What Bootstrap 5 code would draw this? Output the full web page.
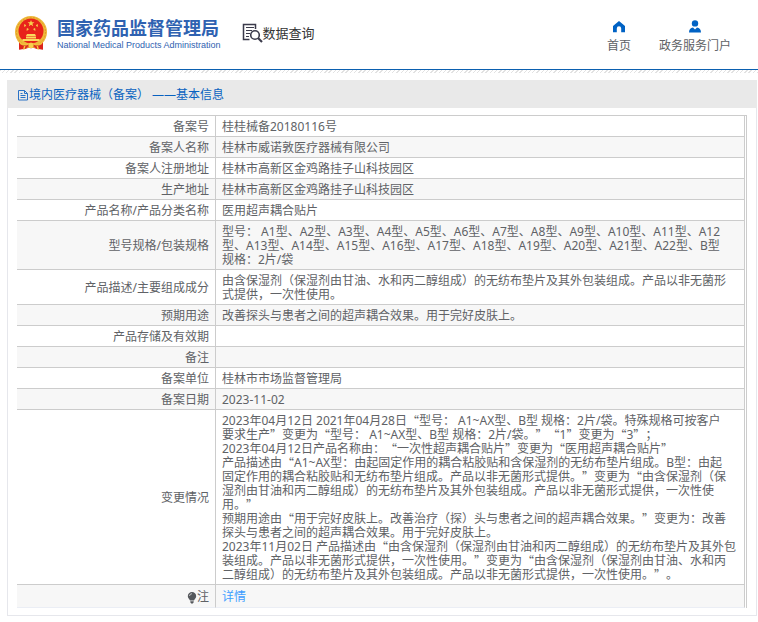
<!DOCTYPE html>
<html lang="zh-CN">
<head>
<meta charset="utf-8">
<meta name="viewport" content="width=device-width, initial-scale=1">
<title>国家药品监督管理局 数据查询</title>
<link href="https://cdn.jsdelivr.net/npm/bootstrap@5.3.0/dist/css/bootstrap.min.css" rel="stylesheet">
<style>
body{font:12px/14px "Noto Sans","Noto Sans CJK SC",sans-serif;color:#606266;background:#fff;text-spacing-trim:space-all}
a{text-decoration:none}
.site-head{height:69px;padding:0 27px 4px 14px}
.rule-line{height:4px;border-top:1px solid #0b60b0;background:repeating-linear-gradient(135deg,#e2e2e2 0 1px,#fff 1px 3px)}
.brand-link{color:#2f62b1;gap:9px}
.brand-text{padding-top:2px}
.brand-cn{font-size:18px;line-height:22px;font-weight:700;white-space:nowrap}
.brand-en{font:500 9px/12px "Liberation Sans",sans-serif;white-space:nowrap}
.query-block{margin-left:21px}
.query-title{font-size:13px;line-height:18px;font-weight:400;color:#333;font-family:"Noto Sans CJK SC",sans-serif;margin:0}
.top-links{gap:28px;padding-top:20px}
.top-links a{color:#606266;gap:6px}
.top-links svg{fill:#0062c4}
.panel-box{margin:7px 1px 0 7px;border:1px solid #e6e7ec}
.panel-title{background:#e9e9e9;color:#0862c0;font-size:12px;line-height:14px;font-weight:400;margin:-1px -1px 0;padding:8px 10px 6px}
.table-frame{margin:7px 9px;border-top:1px solid #ccc;border-right:1px solid #ccc;padding-right:1px}
.info-table{width:100%;border-collapse:separate;border-spacing:0}
.info-table th,.info-table td{padding:4px 6px 2px;border-right:1px solid #ccc;border-bottom:1px solid #ccc;height:21px;vertical-align:middle;font-weight:400}
.info-table td{padding-right:7px}
.info-table th{width:199px;text-align:right}
.info-table tr:nth-child(even){background:#f7f7f7}
.info-table tr:last-child>*{height:23px;border-bottom-color:#ebeef5}
.info-table a{color:#409eff}
.qt{font-family:"Noto Sans CJK SC",sans-serif;vertical-align:top}
</style>
<script src="https://cdn.jsdelivr.net/npm/bootstrap@5.3.0/dist/js/bootstrap.bundle.min.js"></script>
</head>
<body>
<header>
<div class="site-head d-flex justify-content-between">
  <div class="d-flex align-items-center">
    <a href="#" class="brand-link d-flex align-items-center">
      <svg width="34" height="36" viewBox="0 0 34 36" aria-hidden="true">
        <path d="M5 25 5 34.500l6-.5 6-2 6 2 6 .5V25z" fill="#d8211c"/>
        <circle cx="17" cy="17" r="16" fill="#efb93a"/>
        <circle cx="17" cy="17" r="14.500" fill="none" stroke="#dd9a28" stroke-width="1" stroke-dasharray="2 1.500"/>
        <circle cx="17" cy="16" r="12.500" fill="#e8231b"/>
        <path d="m17 5 .9 2.300h2.500l-2 1.500.8 2.400-2.200-1.400-2.200 1.400.8-2.400-2-1.500h2.500z" fill="#f8d44c"/>
        <path d="m10.500 9.500 1.500 1-1.500 1zM23.500 9.500 22 10.500l1.500 1zM13 13.500l1.500.5-1.500 1.500zM21 13.500l-1.500.5 1.500 1.500z" fill="#f8d44c" stroke="#f8d44c" stroke-width=".6"/>
        <path d="M13 19h8l1 2H12zM12 21.500h10v2H12zM8.500 24h17v2h-17z" fill="#fbd95c"/>
        <path d="M5 27.500c4 3 8 3 12 1 4 2 8 2 12-1v7l-6-1-3-2-3 2-3-2-3 2-6 1z" fill="#dc241c"/>
        <path d="M5 26c4 4 8 3 12 1.500C21 29 25 30 29 26l-1 3c-3 2-7 2-9 0h-4c-2 2-6 2-9 0z" fill="#f2bf3d"/>
        <circle cx="17" cy="30.500" r="2.600" fill="#f7d14d"/>
        <path d="m10 31 1.500 0-1 3.500-1.500 0zM22.500 31l1.500 0 1 3.500-1.500 0z" fill="#f5c640"/>
      </svg>
      <div class="brand-text">
        <div class="brand-cn">国家药品监督管理局</div>
        <div class="brand-en">National Medical Products Administration</div>
      </div>
    </a>
    <div class="query-block d-flex align-items-center">
      <svg width="21" height="20" viewBox="0 0 21 20" fill="none" stroke="#3b3b4b" aria-hidden="true">
        <path d="M13.500 6V1.500H1.500v15h6" stroke-width="1.500"/>
        <path d="M4 4.500h8M4 7.500h6M4 10.500h4M4 13.500h3" stroke-width="1"/>
        <circle cx="13" cy="12" r="4.300" stroke-width="1.600"/>
        <path d="m16 15 4 4" stroke-width="2.200"/>
      </svg>
      <h1 class="query-title">数据查询</h1>
    </div>
  </div>
  <nav class="top-links d-flex">
    <a href="#" class="d-flex flex-column align-items-center"><svg width="14" height="13" viewBox="0 0 14 13" aria-hidden="true"><path d="M7 1 1 6v6.300h3.800V8.500a2.200 2.200 0 0 1 4.400 0v3.800H13V6z"/></svg><span>首页</span></a>
    <a href="#" class="d-flex flex-column align-items-center"><svg width="14" height="13" viewBox="0 0 14 13" aria-hidden="true"><circle cx="7" cy="3.400" r="3.200"/><path d="M1 12.500c0-3 1.500-4.700 4-5l2 2 2-2c2.500.3 4 2 4 5z"/></svg><span>政务服务门户</span></a>
  </nav>
</div>
<div class="rule-line"></div>
</header>
<main class="panel-box">
<h2 class="panel-title d-flex align-items-center"><svg class="flex-shrink-0" width="12" height="12" viewBox="0 0 12 12" fill="none" stroke="#2a72c6" aria-hidden="true"><path d="M1.500 1.500h6l3 3v6.500h-9zM7.500 1.500v3h3M3.500 4.500h2M3.500 6.500h5M3.500 8.500h5"/></svg><span>境内医疗器械（备案） ——基本信息</span></h2>
<div class="table-frame">
<table class="info-table">
<tbody>
<tr><th scope="row">备案号</th><td>桂桂械备20180116号</td></tr>
<tr><th scope="row">备案人名称</th><td>桂林市威诺敦医疗器械有限公司</td></tr>
<tr><th scope="row">备案人注册地址</th><td>桂林市高新区金鸡路挂子山科技园区</td></tr>
<tr><th scope="row">生产地址</th><td>桂林市高新区金鸡路挂子山科技园区</td></tr>
<tr><th scope="row">产品名称/产品分类名称</th><td>医用超声耦合贴片</td></tr>
<tr><th scope="row">型号规格/包装规格</th><td>型号： A1型、A2型、A3型、A4型、A5型、A6型、A7型、A8型、A9型、A10型、A11型、A12型、A13型、A14型、A15型、A16型、A17型、A18型、A19型、A20型、A21型、A22型、B型<br>规格：2片/袋</td></tr>
<tr><th scope="row">产品描述/主要组成成分</th><td>由含保湿剂（保湿剂由甘油、水和丙二醇组成）的无纺布垫片及其外包装组成。产品以非无菌形式提供，一次性使用。</td></tr>
<tr><th scope="row">预期用途</th><td>改善探头与患者之间的超声耦合效果。用于完好皮肤上。</td></tr>
<tr><th scope="row">产品存储及有效期</th><td></td></tr>
<tr><th scope="row">备注</th><td></td></tr>
<tr><th scope="row">备案单位</th><td>桂林市市场监督管理局</td></tr>
<tr><th scope="row">备案日期</th><td>2023-11-02</td></tr>
<tr><th scope="row">变更情况</th><td>2023年04月12日 2021年04月28日<span class="qt">“</span>型号： A1~AX型、B型 规格：2片/袋。特殊规格可按客户<br>要求生产<span class="qt">”</span>变更为<span class="qt">“</span>型号： A1~AX型、B型 规格：2片/袋。<span class="qt">”</span><span class="qt">“</span>1<span class="qt">”</span>变更为<span class="qt">“</span>3<span class="qt">”</span>；<br>2023年04月12日产品名称由：<span class="qt">“</span>一次性超声耦合贴片<span class="qt">”</span>变更为<span class="qt">“</span>医用超声耦合贴片<span class="qt">”</span><br>产品描述由<span class="qt">“</span>A1~AX型：由起固定作用的耦合粘胶贴和含保湿剂的无纺布垫片组成。B型：由起<br>固定作用的耦合粘胶贴和无纺布垫片组成。产品以非无菌形式提供。<span class="qt">”</span>变更为<span class="qt">“</span>由含保湿剂（保湿剂由甘油和丙二醇组成）的无纺布垫片及其外包装组成。产品以非无菌形式提供，一次性使用。<span class="qt">”</span><br>预期用途由<span class="qt">“</span>用于完好皮肤上。改善治疗（探）头与患者之间的超声耦合效果。<span class="qt">”</span>变更为：改善探头与患者之间的超声耦合效果。用于完好皮肤上。<br>2023年11月02日 产品描述由<span class="qt">“</span>由含保湿剂（保湿剂由甘油和丙二醇组成）的无纺布垫片及其外包装组成。产品以非无菌形式提供，一次性使用。<span class="qt">”</span>变更为<span class="qt">“</span>由含保湿剂（保湿剂由甘油、水和丙二醇组成）的无纺布垫片及其外包装组成。产品以非无菌形式提供，一次性使用。<span class="qt">”</span>。</td></tr>
<tr><th scope="row"><svg width="10" height="12" viewBox="0 0 10 12" fill="#55585c" aria-hidden="true"><path d="M5 0a4.200 4.200 0 0 0-4.200 4.200C.8 6 2.500 7 3 8.500h4C7.500 7 9.200 6 9.200 4.200A4.200 4.200 0 0 0 5 0zM3.300 9.200h3.400v1L5.800 11.500H4.200l-.9-1.300z"/><path d="M2.500 4A2.500 2.500 0 0 1 5 1.700" fill="none" stroke="#ddd" stroke-width=".8"/></svg>注</th><td><a href="#">详情</a></td></tr>
</tbody>
</table>
</div>
</main>
</body>
</html>
